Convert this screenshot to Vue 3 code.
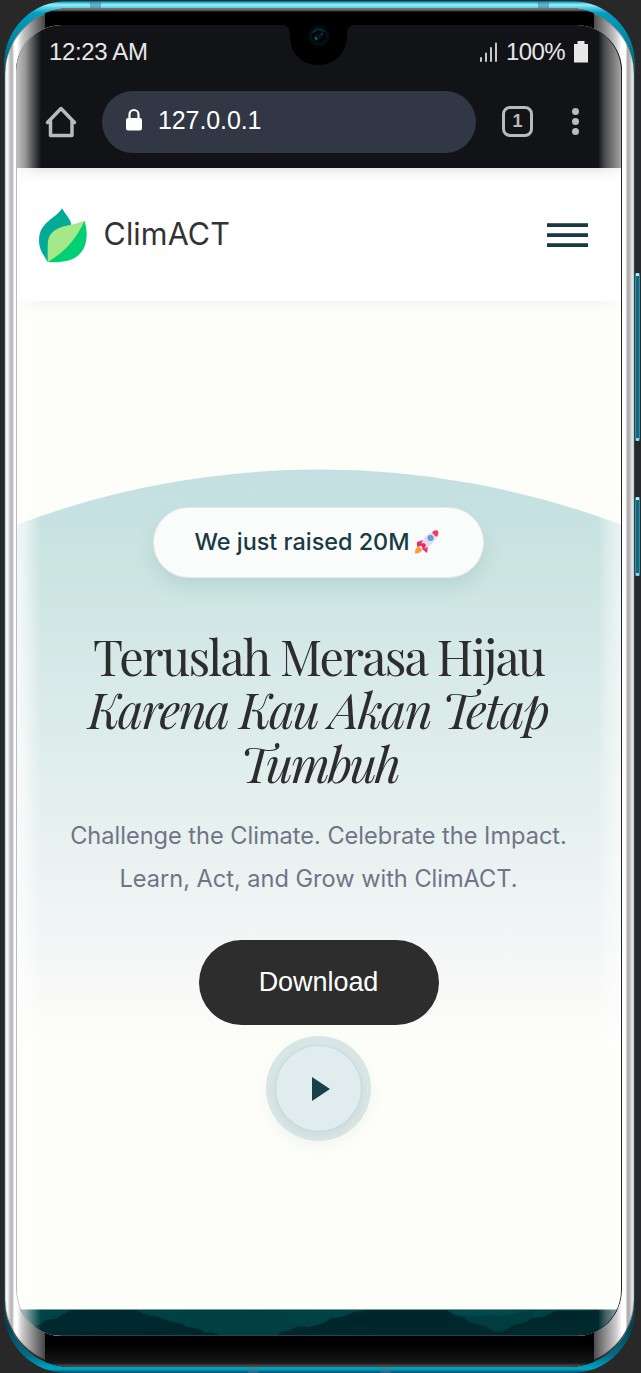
<script setup>
const headline = [
  { text: 'Teruslah Merasa Hijau', x: 77, y: 41.5, width: 453, italic: false },
  { text: 'Karena Kau Akan Tetap', x: 72, y: 94.5, width: 462, italic: true },
  { text: 'Tumbuh', x: 224, y: 148.5, width: 161, italic: true }
]
</script>

<template>
  <main class="stage">
    <div class="phone">
      <i class="band tl"></i><i class="band tr"></i><i class="band bl"></i><i class="band br"></i>
      <i class="side power"></i><i class="side volume"></i>
      <div class="metal">
        <div class="bezel"></div>
        <div class="screen">
          <div class="chrome">
            <div class="status">
              <span class="time">12:23 AM</span>
              <svg class="signal" width="20" height="22" viewBox="0 0 20 22"><path d="M2 17v3M7 12.500v7.500M12 7v13M17 2.500v17.500" /></svg>
              <span class="percent">100%</span>
              <svg class="battery" width="14" height="22" viewBox="0 0 14 22"><path d="M3.500 0h7v3H14v18.500H0V3h3.500z" /></svg>
            </div>
            <div class="address">
              <svg class="home" width="32" height="32" viewBox="0 0 32 32"><path d="M2.500 16.500 16 2.500 29.500 16.500M5.500 15v14.500h21.500V15" /></svg>
              <div class="url">
                <svg width="16" height="23" viewBox="0 0 16 23"><path d="M3.500 11V6.500a4.500 4.500 0 0 1 9 0V11" fill="none" stroke="#fff" stroke-width="2.200" /><rect y="10" width="16" height="12.500" rx="2" fill="#fff" /></svg>
                <span>127.0.0.1</span>
              </div>
              <div class="tabs">1</div>
              <div class="dots"><i></i><i></i><i></i></div>
            </div>
          </div>

          <header class="nav">
            <svg class="leaf" width="48" height="55" viewBox="118 54 144 165">
              <path fill="#00ab98" d="M187 55C168 88 118 95 118 152c0 28 15 43 26 64l20-50 51-62c-3-19-17-29-28-49z" />
              <path fill="#00cf73" d="M255 92 144 216c56 4 118-7 117-86 0-15-4-27-6-38z" />
              <path fill="#a5e887" d="M255 92c-20 7-35 11-55 15-35 8-56 23-56 58v51C188 190 226 154 255 92z" />
            </svg>
            <span class="brand">ClimACT</span>
            <div class="burger"><i></i><i></i><i></i></div>
          </header>

          <section class="hero">
            <svg class="dome" width="606" height="600" viewBox="0 0 606 600">
              <defs>
                <linearGradient id="sky" x1="0" y1="0" x2="0" y2="1">
                  <stop offset="0" stop-color="#c4dfdf" /><stop offset=".08" stop-color="#c7e2e2" />
                  <stop offset=".15" stop-color="#cae4e0" /><stop offset=".35" stop-color="#d7e9e8" />
                  <stop offset=".55" stop-color="#e2efed" /><stop offset=".8" stop-color="#f1f5f5" />
                  <stop offset=".92" stop-color="#f9f9f8" /><stop offset="1" stop-color="#fdfef9" />
                </linearGradient>
              </defs>
              <path fill="url(#sky)" d="M0 56A856 856 0 0 1 606 56V575H0z" />
            </svg>
            <div class="pill">
              <span>We just raised 20M</span>
              <svg width="24" height="24" viewBox="0 0 24 24">
                <path d="M0 23.500c0-4 1-6 4-7l3 3c-1 3-4 4-7 4z" fill="#ff9b32" />
                <path d="M8 10 2 12l0 5 6-2zM13 16l-1 7-5-4 3-4z" fill="#f12b68" />
                <path d="M6 16C7 8 13 2 22 1c1 8-5 14-13 18z" fill="#e3dde9" />
                <path d="M17 2c3-2 5-2 6-1 1 2 0 4-1 6-2-1-4-3-5-5z" fill="#f83a66" />
                <path d="m5 14 4-1 2 2-2 5z" fill="#e82a68" />
                <circle cx="15.500" cy="8" r="3" fill="#7893b5" /><circle cx="15.500" cy="8" r="2.100" fill="#4ca9fa" />
              </svg>
            </div>
            <h1>
              <svg width="605" height="170" viewBox="0 0 605 170">
                <text v-for="line in headline" :key="line.text" :x="line.x" :y="line.y" :textLength="line.width" lengthAdjust="spacing" :class="{ italic: line.italic }">{{ line.text }}</text>
              </svg>
            </h1>
            <p><span class="lead">Challenge the Climate. Celebrate the Impact.</span><br /><span class="sub">Learn, Act, and Grow with ClimACT.</span></p>
            <button class="download">Download</button>
            <div class="play"><div><svg width="20" height="26" viewBox="0 0 20 26"><path d="M1 1v24l18-12z" fill="#174149" /></svg></div></div>
          </section>

          <footer>
            <svg width="606" height="27" viewBox="0 0 606 27">
              <defs>
                <linearGradient id="dusk" x1="0" y1="0" x2="1" y2="0"><stop offset="0" stop-color="#004348" /><stop offset=".4" stop-color="#003f42" /><stop offset=".8" stop-color="#004b4e" /><stop offset="1" stop-color="#003035" /></linearGradient>
                <linearGradient id="ridge" x1="0" y1="0" x2="1" y2="1"><stop offset="0" stop-color="#002b30" /><stop offset=".5" stop-color="#00262c" /><stop offset="1" stop-color="#002b2f" /></linearGradient>
              </defs>
              <path fill="url(#dusk)" d="M0 0h606v27H0z" />
              <path fill="#003c40" d="M430 1l15 4 15 1 13-1 14 1 15-3 15-3v24h-87zM225 1l9-1 5 1 12-1v3z" />
              <path fill="url(#ridge)" d="M0 24l17-7 8-3 4-4 10-1 16-9h66l10 5 12 2 13 5 9 1 6 4 13 2 5 4 7-1 10 4 8 3H0zM257 27l9-5 8-2 8-4 10 1 16-4 7-5 10-1 13-5 14-2h79l8 6 7 1 9 6 14 3 8 5 9 1 12-7 10-2 9-5 10-1 12-6h57v27z" />
            </svg>
          </footer>
          <div class="glare"></div>
          <svg class="notch" width="80" height="42" viewBox="279 24 80 42">
            <path d="M279 24c9 1 12 3 12 11 0 18 11 30 28 30s29-12 29-30c0-8 3-10 11-11z" />
            <circle cx="320" cy="36" r="11" fill="#050708" /><circle cx="320" cy="36" r="8" fill="#020506" stroke="#071a20" />
            <path d="M314 33a6.500 6.500 0 0 1 11-1" fill="none" stroke="#063340" stroke-width="1.500" />
            <circle cx="320" cy="36" r="3" fill="#06151c" /><path d="m316 37 2 3" stroke="#007d99" stroke-width="1.500" /><path d="m322 35 2-2" stroke="#06475a" stroke-width="1.500" />
          </svg>
        </div>
      </div>
    </div>
  </main>
</template>

<style>
body { background: #282828; }
</style>

<style scoped>
* { box-sizing: border-box; }
.stage { width: 641px; height: 1373px; padding: 1px 6px 0 4px; overflow: hidden; background: #282828; font-family: Inter, "Liberation Sans", sans-serif; }
.phone { position: relative; width: 631px; height: 1372px; padding: 7px 1px 6px; border-radius: 63px; background: linear-gradient(180deg, #006c86 0, #078fae 1px, #51ccdf 2px, #a2ecf5 4px, #60d8ec 6px, #009ec0 12px, #008cab 35px, #006c86 55px, #164f5a 75px, #164f5a 1290px, #004255 1325px, #006f8b 1355px, #00a4c4 1368px, #005d75 1371px); }
.metal { position: relative; width: 629px; height: 1359px; padding: 17px 12px 31px 11px; border-radius: 66px; overflow: hidden; background: linear-gradient(90deg, #dedede 0, #fff 2px, #dadada 4px, #b4b4b4 6px, #c5c5c5 8px, #fff 9px, #fff 12px, #ccc 17px, #454545 40px, #111 40.500px, #111 588px, #4d4d4d 589px, #ccc 611px, #fff 617px, #fff 621px, #aaa 622px, #bbb 625px, #e6e6e6 627px, #ddd 629px); box-shadow: inset 0 1px 0 #777, inset 0 -2px 1px #202020; }
.bezel { position: absolute; inset: 0 40px 0 40px; background: linear-gradient(180deg, #777 0, #666 2px, #000 4px, #000 1337px, #171717 1355px, #4b4b4b 1358px); }
.screen { position: relative; width: 606px; height: 1311px; border-radius: 46px; overflow: hidden; background: #fdfdf8; }
.chrome { height: 143px; background: #121317; padding: 13px 28px 0 28px; }
.status { height: 28px; display: flex; align-items: center; color: #e7e7e7; font: 24px "Liberation Sans", sans-serif; }
.time { margin-left: 5px; width: 100px; letter-spacing: -.35px; white-space: nowrap; }
.signal { margin-left: 330px; fill: none; stroke: #ddd; stroke-width: 1.800; stroke-linecap: round; flex: none; }
.percent { width: 60px; margin-left: 7px; letter-spacing: -.6px; }
.battery { margin-left: 8px; fill: #e7e7e7; flex: none; }
.address { margin-top: 25px; display: flex; align-items: center; height: 62px; }
.home { margin: -1px 0 0 1px; fill: none; stroke: #b9babb; stroke-width: 3.500; stroke-linejoin: round; stroke-linecap: round; flex: none; }
.url { width: 374px; height: 62px; margin-left: 25px; padding-left: 24px; border-radius: 31px; display: flex; align-items: center; background: #323746; color: #fff; font: 25px/30px "Liberation Sans", sans-serif; flex: none; }
.url svg { margin-top: -5px; }
.url span { margin: -4px 0 0 16px; letter-spacing: -.1px; }
.tabs { width: 31px; height: 31px; margin-left: 26px; margin-top: -1px; border: 3px solid #b9babb; border-radius: 8px; color: #b9babb; font: bold 18px/25px "Liberation Sans", sans-serif; text-align: center; flex: none; }
.dots { margin: -2px 0 0 39px; display: grid; gap: 3px; }
.dots i { width: 7px; height: 7px; border-radius: 50%; background: #b9babb; }
.nav { height: 133px; display: flex; align-items: center; padding: 0 34px 0 23px; background: linear-gradient(#eaeaea 0, #f8f8f8 7px, #fff 14px); box-shadow: 0 2px 14px #0000000d; position: relative; z-index: 1; }
.leaf { margin-top: 1px; flex: none; }
.brand { width: 130px; margin: -1px 0 0 16.500px; color: #333; font-size: 30.500px; line-height: 40px; letter-spacing: .1px; }
.burger { margin-left: auto; display: grid; gap: 6px; width: 41px; }
.burger i { height: 4px; background: #183a43; border-top: .5px solid #4a666c; }
.hero { position: relative; height: 1008px; padding: 206px 1px 0 0; display: flex; flex-direction: column; align-items: center; background: #fdfef9; }
.hero > * { position: relative; flex: none; }
.hero > .dome { position: absolute; top: 168px; left: 0; }
.pill { width: 331px; height: 71px; border-radius: 36px; border: 1px solid #e5e9e9; background: #fafcfb; box-shadow: 0 9px 18px #507a7826; display: flex; align-items: center; padding: 0 0 2px 40.500px; color: #183a43; font-size: 23.400px; font-weight: 500; }
.pill span { width: 216px; white-space: nowrap; }
.pill svg { margin-left: 4px; flex: none; }
h1 { margin: 56px 0 0; height: 170px; }
h1 svg { display: block; overflow: visible; }
h1 text { font: 48.500px "Playfair Display", "Liberation Serif", serif; fill: #2d2d2d; }
h1 text.italic { font-style: italic; }
p { margin: 9.500px 0 0; width: 540px; text-align: center; color: #6f7586; font-size: 23.550px; line-height: 43px; white-space: nowrap; }
.download { width: 240px; height: 85px; margin-top: 40.500px; padding: 0 0 1px; border: 0; border-radius: 43px; background: #2d2d2d; color: #fff; font: 27px "Liberation Sans", sans-serif; letter-spacing: -.05px; }
.play { width: 105px; height: 105px; margin-top: 11px; border-radius: 50%; padding: 10px; background: #d7e5e4; box-shadow: 0 6px 14px #50707010; }
.play > div { width: 85px; height: 85px; border-radius: 50%; background: #e0eced; display: flex; align-items: center; justify-content: center; padding-left: 4px; box-shadow: 0 3px 8px #36606012, 0 0 0 1px #cedddd; }
footer { height: 27px; border-top: 1px solid #799a9b; border-bottom: 1px solid #294347; overflow: hidden; }
footer svg { display: block; }
.glare { position: absolute; z-index: 2; inset: 0; background: linear-gradient(90deg, #ffffffb8 0, #ffffff91 8px, #ffffff45 16px, #ffffff00 24px, #ffffff00 581px, #ffffff40 588px, #ffffff91 602px, #ffffffa0); border-left: 1px solid #bbb; border-right: 1px solid #222; border-radius: 46px; pointer-events: none; }
.notch { position: absolute; z-index: 3; left: 262px; top: -1px; }
.side { position: absolute; left: 631px; width: 5px; border: 1px solid #3290a5; border-top: 3px solid #b8edf4; border-bottom: 3px solid #8ed8e4; border-radius: 2px; background: #176579; }
.power { top: 272px; height: 168px; }
.volume { top: 496px; height: 79px; }
.band { position: absolute; width: 11px; height: 6px; background: #397c8a80; }
.tl { left: 86px; top: 1px; }.tr { left: 534px; top: 1px; }.bl { left: 244px; bottom: 0; }.br { left: 376px; bottom: 0; }
</style>
